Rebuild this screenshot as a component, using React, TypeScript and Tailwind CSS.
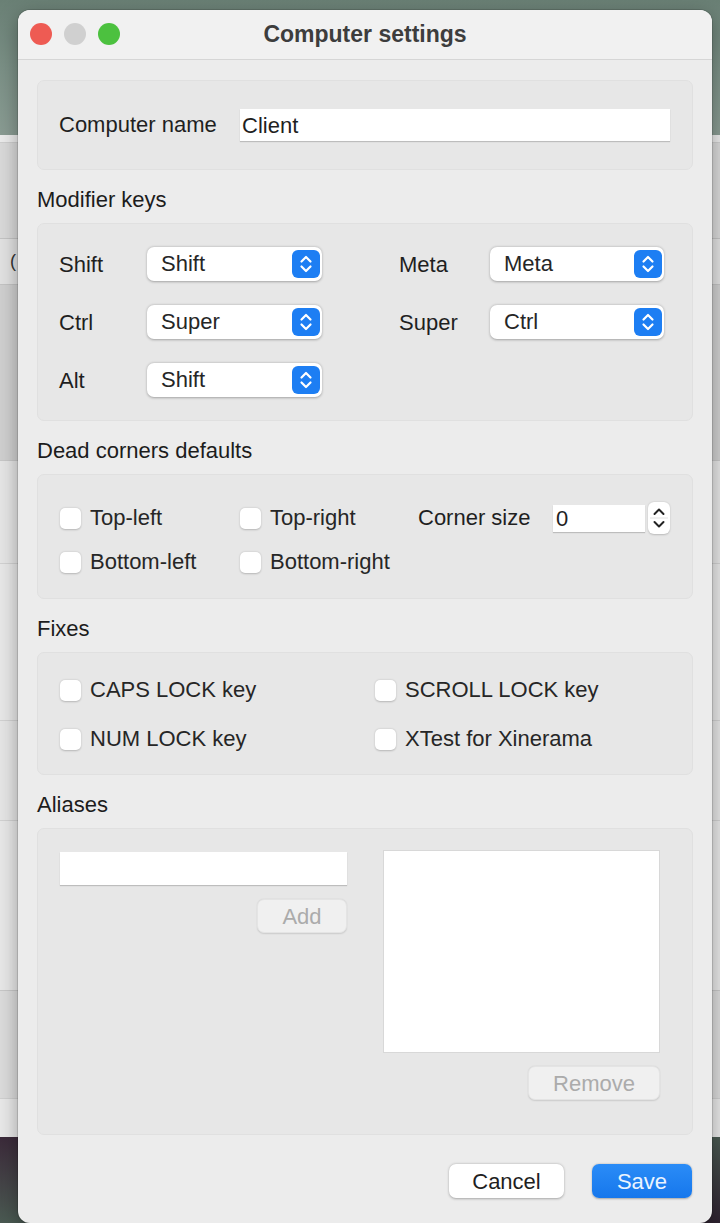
const StepperIcon = () => (
  <svg viewBox="0 0 28 28" className="h-[28px] w-[28px]">
    <path d="M9.5 11.5 L14 7 L18.5 11.5" fill="none" stroke="white" strokeWidth="2.2" strokeLinecap="round" strokeLinejoin="round" />
    <path d="M9.5 16.5 L14 21 L18.5 16.5" fill="none" stroke="white" strokeWidth="2.2" strokeLinecap="round" strokeLinejoin="round" />
  </svg>
);

const Select = ({ value, width }: { value: string; width: string }) => (
  <div
    className={`${width} flex h-[34px] items-center justify-between rounded-[7px] bg-white pl-[14px] pr-[2px] shadow-[0_0.5px_2.5px_rgba(0,0,0,0.3)]`}
  >
    <span className="text-[22px] leading-none text-[#262626]">{value}</span>
    <div className="flex h-[28px] w-[28px] items-center justify-center rounded-[6px] bg-[#1d7ef3]">
      <StepperIcon />
    </div>
  </div>
);

const Checkbox = ({ label }: { label: string }) => (
  <label className="flex items-center gap-[9px]">
    <span className="h-[21px] w-[21px] rounded-[5px] bg-white shadow-[0_0.5px_2px_rgba(0,0,0,0.22)]" />
    <span className="text-[22px] leading-none text-[#262626]">{label}</span>
  </label>
);

const Heading = ({ children }: { children: React.ReactNode }) => (
  <h3 className="pt-[17px] pb-[10px] text-[22px] leading-[26px] text-[#1c1c1c]">{children}</h3>
);

const Group = ({ className, children }: { className: string; children: React.ReactNode }) => (
  <div className={`rounded-[7px] border border-[#e0e0e0] bg-[#e7e7e7] ${className}`}>{children}</div>
);

const Backdrop = () => (
  <div className="flex h-[1223px] flex-col">
    <div className="h-[135px] bg-gradient-to-b from-[#6a8075] via-[#7b9086] to-[#8a9c93]" />
    <div className="flex h-[1002px] flex-col bg-[#e4e4e4]">
      <div className="h-[8px] border-b border-[#cfcfcf] bg-[#ececec]" />
      <div className="h-[95px] bg-[#dadada]" />
      <div className="flex h-[47px] items-center justify-between border-y border-[#c4c4c4] bg-[#e2e2e2] px-[10px] text-[18px] text-[#333]">
        <span>(</span>
        <span>-</span>
      </div>
      <div className="h-[175px] bg-[#d0d0d0]" />
      <div className="h-[103px] border-t border-[#c8c8c8] bg-[#e6e6e6]" />
      <div className="h-[157px] border-t border-[#d2d2d2] bg-[#e8e8e8]" />
      <div className="h-[100px] border-t border-[#d2d2d2] bg-[#e6e6e6]" />
      <div className="h-[170px] border-t border-[#d2d2d2] bg-[#e8e8e8]" />
      <div className="h-[108px] border-t border-[#c8c8c8] bg-[#dcdcdc]" />
      <div className="flex-1 border-t border-[#d0d0d0] bg-[#e9e9e9]" />
    </div>
    <div className="flex-1 bg-gradient-to-br from-[#3b2a3a] via-[#4a5a52] to-[#2e2230]" />
  </div>
);

const App = () => {
  return (
    <div className="relative h-[1223px] w-[720px] overflow-hidden font-['Liberation_Sans',Arial,sans-serif]">
      <Backdrop />

      <div className="absolute top-[10px] left-[18px] flex h-[1213px] w-[694px] flex-col overflow-hidden rounded-[12px] bg-[#ececec] shadow-[0_0_0_1px_rgba(0,0,0,0.12),0_6px_20px_rgba(0,0,0,0.35)]">
        {/* title bar */}
        <div className="relative flex h-[50px] shrink-0 items-center justify-center border-b border-[#d6d6d6] bg-[#f1f1f1]">
          <div className="absolute top-[13px] left-[12px] flex gap-[12px]">
            <span className="h-[22px] w-[22px] rounded-full bg-[#ee5b53]" />
            <span className="h-[22px] w-[22px] rounded-full bg-[#d0d0d0]" />
            <span className="h-[22px] w-[22px] rounded-full bg-[#4cc13f]" />
          </div>
          <h1 className="text-[23px] font-bold text-[#3d3d3d]">Computer settings</h1>
        </div>

        <div className="flex flex-1 flex-col px-[19px] pt-[20px]">
          <Group className="flex h-[90px] items-center gap-[21px] px-[21px]">
            <span className="w-[160px] text-[22px] leading-none text-[#1f1f1f]">Computer name</span>
            <input
              defaultValue="Client"
              className="h-[32px] w-[430px] bg-white px-[2px] text-[22px] text-[#1f1f1f] shadow-[0_1px_1px_rgba(0,0,0,0.18)] outline-none"
            />
          </Group>

          <Heading>Modifier keys</Heading>
          <Group className="grid h-[198px] grid-cols-[88px_175px_77px_91px_174px] content-start gap-y-[24px] px-[21px] pt-[23px]">
            <span className="self-center text-[22px] text-[#1f1f1f]">Shift</span>
            <Select value="Shift" width="w-[175px]" />
            <span />
            <span className="self-center text-[22px] text-[#1f1f1f]">Meta</span>
            <Select value="Meta" width="w-[174px]" />

            <span className="self-center text-[22px] text-[#1f1f1f]">Ctrl</span>
            <Select value="Super" width="w-[175px]" />
            <span />
            <span className="self-center text-[22px] text-[#1f1f1f]">Super</span>
            <Select value="Ctrl" width="w-[174px]" />

            <span className="self-center text-[22px] text-[#1f1f1f]">Alt</span>
            <Select value="Shift" width="w-[175px]" />
          </Group>

          <Heading>Dead corners defaults</Heading>
          <Group className="flex h-[125px] flex-col gap-[14px] px-[22px] pt-[28px]">
            <div className="flex h-[30px] items-center">
              <div className="w-[180px]">
                <Checkbox label="Top-left" />
              </div>
              <div className="w-[178px]">
                <Checkbox label="Top-right" />
              </div>
              <span className="w-[135px] text-[22px] leading-none text-[#1f1f1f]">Corner size</span>
              <input
                defaultValue="0"
                className="h-[27px] w-[92px] bg-white px-[3px] text-[22px] text-[#1f1f1f] shadow-[0_1px_1px_rgba(0,0,0,0.18)] outline-none"
              />
              <div className="ml-[3px] flex h-[32px] w-[22px] flex-col items-center justify-center rounded-[6px] bg-white shadow-[0_0.5px_2px_rgba(0,0,0,0.2)]">
                <svg viewBox="0 0 22 32" className="h-[32px] w-[22px]">
                  <path d="M6.5 12 L11 7.5 L15.5 12" fill="none" stroke="#222" strokeWidth="2" strokeLinecap="round" strokeLinejoin="round" />
                  <line x1="2" y1="16" x2="20" y2="16" stroke="#e2e2e2" strokeWidth="1" />
                  <path d="M6.5 20 L11 24.5 L15.5 20" fill="none" stroke="#222" strokeWidth="2" strokeLinecap="round" strokeLinejoin="round" />
                </svg>
              </div>
            </div>
            <div className="flex h-[30px] items-center">
              <div className="w-[180px]">
                <Checkbox label="Bottom-left" />
              </div>
              <Checkbox label="Bottom-right" />
            </div>
          </Group>

          <Heading>Fixes</Heading>
          <Group className="flex h-[123px] flex-col gap-[19px] px-[22px] pt-[22px]">
            <div className="flex h-[30px] items-center">
              <div className="w-[315px]">
                <Checkbox label="CAPS LOCK key" />
              </div>
              <Checkbox label="SCROLL LOCK key" />
            </div>
            <div className="flex h-[30px] items-center">
              <div className="w-[315px]">
                <Checkbox label="NUM LOCK key" />
              </div>
              <Checkbox label="XTest for Xinerama" />
            </div>
          </Group>

          <Heading>Aliases</Heading>
          <Group className="flex h-[307px] gap-[36px] pl-[22px] pt-[21px]">
            <div className="flex w-[287px] flex-col items-end gap-[14px] pt-[2px]">
              <input className="h-[33px] w-full bg-white px-[3px] text-[22px] shadow-[0_1px_1px_rgba(0,0,0,0.18)] outline-none" />
              <button className="h-[34px] w-[90px] rounded-[7px] border border-[#e4e4e4] bg-[#f0f0f0] text-[22px] text-[#ababab] shadow-[0_0.5px_1.5px_rgba(0,0,0,0.12)]">
                Add
              </button>
            </div>
            <div className="flex w-[277px] flex-col items-end gap-[13px]">
              <div className="h-[203px] w-full border border-[#d8d8d8] bg-white" />
              <button className="h-[34px] w-[132px] rounded-[7px] border border-[#e4e4e4] bg-[#f0f0f0] text-[22px] text-[#ababab] shadow-[0_0.5px_1.5px_rgba(0,0,0,0.12)]">
                Remove
              </button>
            </div>
          </Group>

          <div className="flex justify-end gap-[28px] pt-[29px] pr-[1px]">
            <button className="h-[34px] w-[115px] rounded-[7px] bg-white text-[22px] text-[#1f1f1f] shadow-[0_0.5px_2.5px_rgba(0,0,0,0.3)]">
              Cancel
            </button>
            <button className="h-[34px] w-[100px] rounded-[7px] bg-gradient-to-b from-[#2a8cf7] to-[#1677ec] text-[22px] text-[#eaf4ff] shadow-[0_0.5px_2px_rgba(0,0,0,0.3)]">
              Save
            </button>
          </div>
        </div>
      </div>
    </div>
  );
};

export default App;
